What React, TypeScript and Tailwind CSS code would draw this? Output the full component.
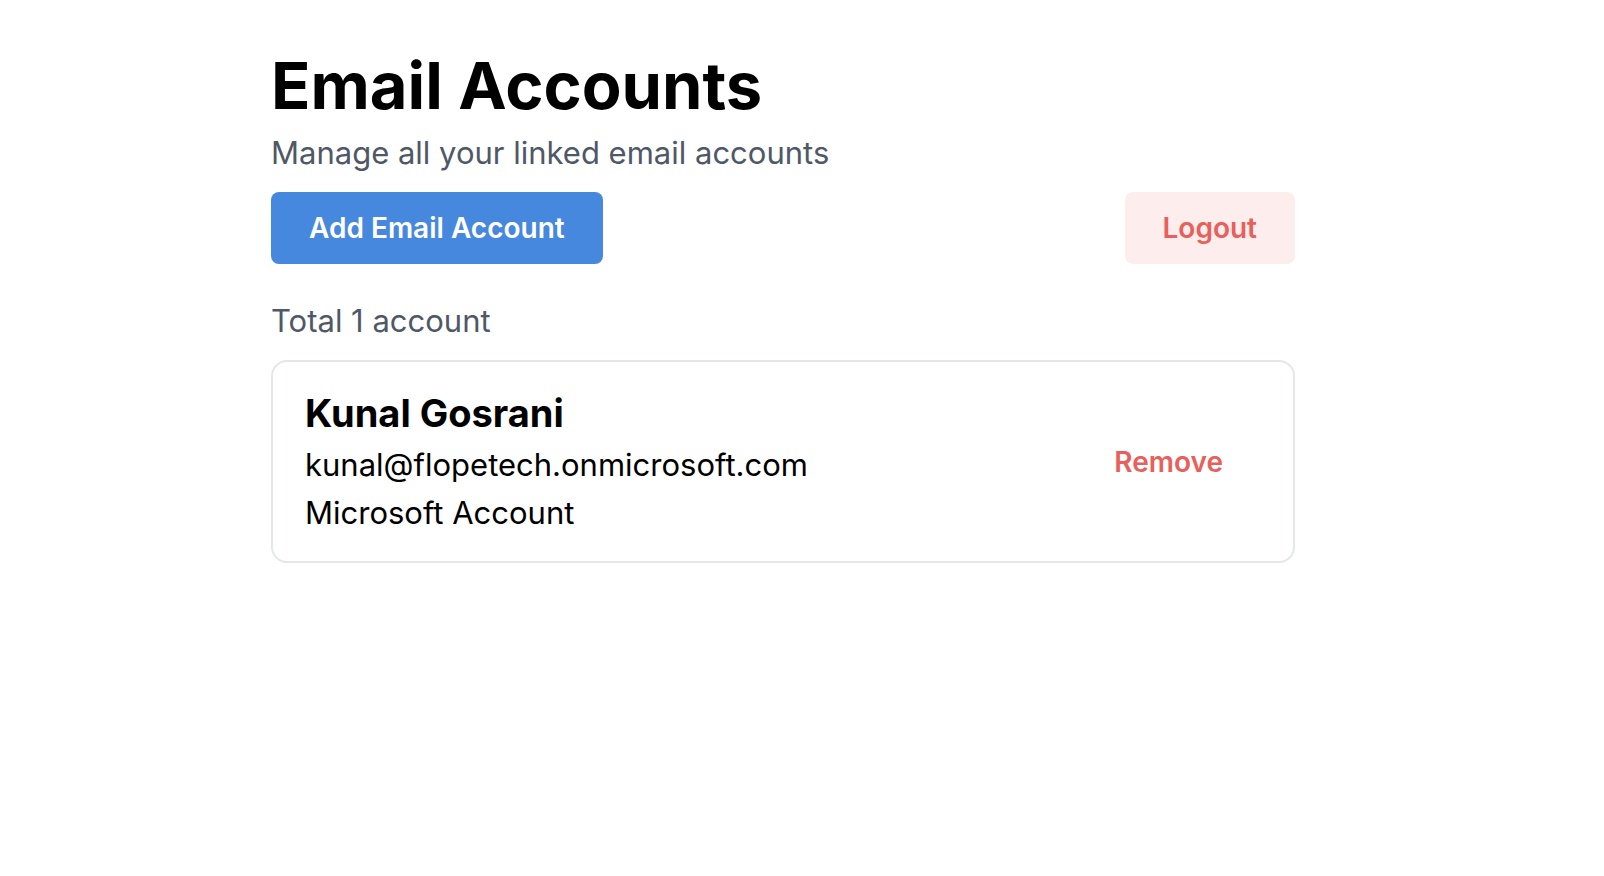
export default function App() {
  return (
    <div className="min-h-screen bg-white pr-[38px] font-['Inter',sans-serif] text-black">
      <main className="mx-auto w-full max-w-[1024px] pt-[46px]">
        <h1 className="text-[65px] leading-[80px] font-bold">Email Accounts</h1>
        <p className="mt-[3px] text-[31px] leading-[48px] text-[#4f5867]">Manage all your linked email accounts</p>
        <div className="mt-[15px] flex items-center justify-between">
          <button type="button" className="h-[72px] rounded-lg bg-[#4688de] px-[38px] text-[28px] font-semibold text-white">Add Email Account</button>
          <button type="button" className="h-[72px] rounded-lg bg-[#fdeeed] px-[38px] text-[28px] font-semibold text-[#e8605c]">Logout</button>
        </div>
        <p className="mt-[33px] text-[31px] leading-[48px] text-[#4f5867]">Total 1 account</p>
        <section className="mt-[15px] flex items-center justify-between rounded-2xl border-2 border-[#e5e6eb] px-8 py-6">
          <div>
            <h2 className="text-[38px] leading-[55px] font-bold">Kunal Gosrani</h2>
            <p className="text-[31px] leading-[48px]">kunal@flopetech.onmicrosoft.com</p>
            <p className="text-[31px] leading-[48px]">Microsoft Account</p>
          </div>
          <button type="button" className="h-[72px] px-[38px] text-[28px] font-semibold text-[#e8605c]">Remove</button>
        </section>
      </main>
    </div>
  );
}
